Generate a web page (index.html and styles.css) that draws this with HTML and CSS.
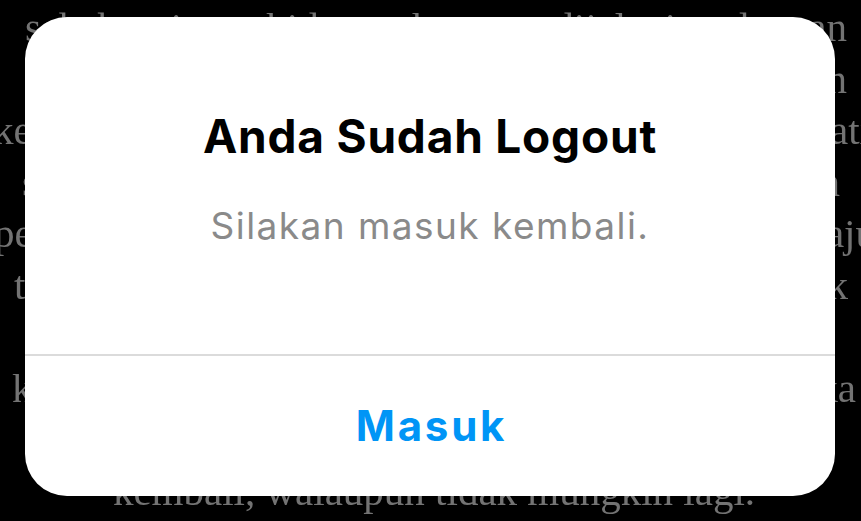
FILE: index.html
```html
<!DOCTYPE html>
<html lang="id">
<head>
<meta charset="utf-8">
<title>Anda Sudah Logout</title>
<link rel="stylesheet" href="styles.css">
</head>
<body>
<div class="page">
  <div class="backdrop">
    <div class="line l0">sebab itu hidup harus dijalani dengan</div>
    <div class="line l1">sabar agar tidak menyesal kemudian</div>
    <div class="line l2">kenangan biarlah menjadi pelajaran hati</div>
    <div class="line l3">setiap orang punya jalan hidup sendiri dan</div>
    <div class="line l4">pernah jatuh sebelum akhirnya bangkit maju</div>
    <div class="line l5">tetapi semua dapat dilalui dengan baik</div>
    <div class="line l6">hati kepada sesama dan diri sendiri</div>
    <div class="line l7">kita tidak pernah tahu apa terjadi maka</div>
    <div class="line l8">nikmatilah setiap detik yang masih ada</div>
    <div class="line last">kembali, walaupun tidak mungkin lagi.</div>
  </div>

  <div class="dialog" role="dialog">
    <div class="dialog-body">
      <h1 class="dialog-title">Anda Sudah Logout</h1>
      <p class="dialog-text">Silakan masuk kembali.</p>
    </div>
    <button class="dialog-action" type="button">Masuk</button>
  </div>
</div>
</body>
</html>
```

FILE: styles.css
```css
* { box-sizing: border-box; }

html, body {
  margin: 0;
  padding: 0;
  background: #000;
}

.page {
  position: relative;
  width: 861px;
  height: 521px;
  overflow: hidden;
  background: #000;
}

.backdrop {
  padding-top: 2.4px;
  font-family: "Liberation Serif", "Times New Roman", serif;
  font-size: 41px;
  line-height: 51.5px;
  color: #737373;
  filter: blur(0.7px);
}

.line {
  white-space: nowrap;
  text-align: justify;
  text-align-last: justify;
}

.l0 { margin-left: 25px; margin-right: 14px; }
.l1 { margin-left: 60px; margin-right: 14px; }
.l2 { margin-left: -7px; margin-right: -10px; }
.l3 { margin-left: 22px; margin-right: 21px; }
.l4 { margin-left: -6px; margin-right: -15px; }
.l5 { margin-left: 14px; margin-right: 13px; }
.l6 { margin-left: 60px; margin-right: 60px; }
.l7 { margin-left: 12px; margin-right: 5px; }
.l8 { margin-left: 60px; margin-right: 60px; }

.line.last {
  text-align: center;
  text-align-last: center;
  padding-left: 7px;
}

.dialog {
  position: absolute;
  left: 25px;
  top: 17px;
  width: 810px;
  height: 479px;
  background: #fff;
  border-radius: 42px;
  display: flex;
  flex-direction: column;
  overflow: hidden;
  font-family: Inter, "Noto Sans", sans-serif;
}

.dialog-body {
  padding: 92.8px 32px 106.95px;
  border-bottom: 2px solid #dbdbdb;
  text-align: center;
}

.dialog-title {
  margin: 0;
  font-size: 46px;
  line-height: 53px;
  font-weight: 700;
  color: #000;
  letter-spacing: 0.8px;
}

.dialog-text {
  margin: 41.25px 0 0;
  font-size: 37px;
  line-height: 43px;
  font-weight: 400;
  color: #8a8a8a;
  letter-spacing: 1.45px;
}

.dialog-action {
  flex: 1;
  display: flex;
  align-items: center;
  justify-content: center;
  width: 100%;
  margin: 0;
  padding: 0 0 0 3px;
  border: 0;
  background: transparent;
  font-family: Inter, "Noto Sans", sans-serif;
  font-size: 42px;
  line-height: 50px;
  font-weight: 700;
  color: #0095f6;
  letter-spacing: 2.8px;
  cursor: pointer;
}
```
